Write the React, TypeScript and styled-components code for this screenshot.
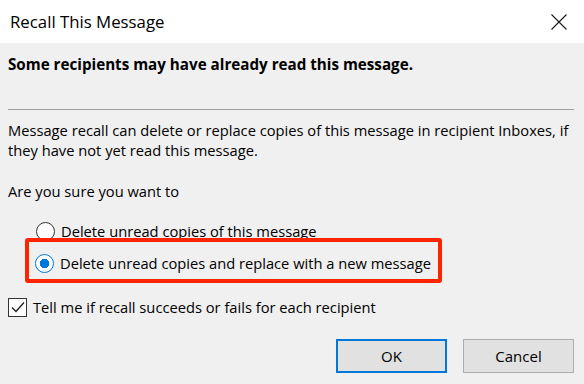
import React from 'react'
import styled, { createGlobalStyle } from 'styled-components'

const GlobalStyle = createGlobalStyle`
    html, body {
        margin: 0;
        padding: 0;
        background: #f0f0f0;
    }
    body {
        font-family: "Open Sans", "Noto Sans", "Liberation Sans", sans-serif;
        color: #000;
    }
`

const App = () => {
    return (
        <Window>
            <GlobalStyle />
            <TitleBar>
                <Title>Recall This Message</Title>
                <CloseButton aria-label='Close'>
                    <svg width='16' height='16' viewBox='0 0 16 16'>
                        <path d='M0.5 0.5 L15.5 15.5 M15.5 0.5 L0.5 15.5' stroke='#1a1a1a' strokeWidth='1.1' fill='none' />
                    </svg>
                </CloseButton>
            </TitleBar>
            <Body>
                <Warning>Some recipients may have already read this message.</Warning>
                <Divider />
                <Paragraph>
                    Message recall can delete or replace copies of this message in recipient Inboxes, if they have not yet read this message.
                </Paragraph>
                <Question>Are you sure you want to</Question>
                <Options>
                    <OptionRow>
                        <Radio />
                        <OptionLabel>Delete unread copies of this message</OptionLabel>
                    </OptionRow>
                    <Highlight>
                        <OptionRow>
                            <Radio checked />
                            <OptionLabel>Delete unread copies and replace with a new message</OptionLabel>
                        </OptionRow>
                    </Highlight>
                </Options>
                <CheckRow>
                    <CheckBox>
                        <svg width='14' height='12' viewBox='0 0 14 12'>
                            <path d='M1 6.5 L5 10.5 L13 1.5' stroke='#222' strokeWidth='1.4' fill='none' />
                        </svg>
                    </CheckBox>
                    <OptionLabel>Tell me if recall succeeds or fails for each recipient</OptionLabel>
                </CheckRow>
                <Buttons>
                    <DialogButton primary>OK</DialogButton>
                    <DialogButton>Cancel</DialogButton>
                </Buttons>
            </Body>
        </Window>
    )
}

const Window = styled.div`
    width: 584px;
    height: 384px;
    display: flex;
    flex-direction: column;
    background: #f0f0f0;
    overflow: hidden;
`

const TitleBar = styled.div`
    height: 43px;
    background: #fff;
    display: flex;
    align-items: center;
    justify-content: space-between;
    padding: 0 17px 0 10px;
    box-sizing: border-box;
`

const Title = styled.div`
    font-size: 16.8px;
    color: #000;
`

const CloseButton = styled.div`
    width: 16px;
    height: 16px;
    display: flex;
`

const Body = styled.div`
    flex: 1;
    padding: 11px 10px 0 8px;
    display: flex;
    flex-direction: column;
`

const Warning = styled.div`
    font-size: 15.2px;
    font-weight: 700;
    line-height: 20px;
`

const Divider = styled.div`
    height: 1px;
    background: #a0a0a0;
    margin-top: 35px;
`

const Paragraph = styled.p`
    margin: 10px 0 0;
    font-size: 14.7px;
    line-height: 20px;
`

const Question = styled.div`
    margin-top: 21px;
    font-size: 14.7px;
    line-height: 20px;
`

const Options = styled.div`
    margin-top: 20px;
    padding-left: 28px;
    display: flex;
    flex-direction: column;
`

const OptionRow = styled.div`
    display: flex;
    align-items: center;
    gap: 6px;
    height: 20px;
`

const Highlight = styled.div`
    margin: -3px 0 0 -11px;
    width: 417px;
    height: 45px;
    box-sizing: border-box;
    border: 4.5px solid #ff2400;
    border-radius: 3px;
    padding: 11px 0 0 6px;
`

const Radio = styled.span<{ checked?: boolean }>`
    width: 19px;
    height: 19px;
    box-sizing: border-box;
    border-radius: 50%;
    border: 1.2px solid ${p => p.checked ? '#0078d7' : '#333'};
    background: ${p => p.checked ? 'radial-gradient(circle, #0078d7 0 4.5px, #fff 5px)' : '#fff'};
    flex-shrink: 0;
`

const OptionLabel = styled.span`
    font-size: 14.7px;
    line-height: 20px;
    white-space: nowrap;
`

const CheckRow = styled.div`
    margin-top: 14px;
    display: flex;
    align-items: center;
    gap: 6px;
`

const CheckBox = styled.span`
    width: 19px;
    height: 19px;
    box-sizing: border-box;
    border: 1px solid #333;
    background: #fff;
    display: flex;
    align-items: center;
    justify-content: center;
`

const Buttons = styled.div`
    margin-top: 22px;
    display: flex;
    justify-content: flex-end;
    gap: 16px;
`

const DialogButton = styled.button<{ primary?: boolean }>`
    width: 111px;
    height: 34px;
    box-sizing: border-box;
    background: #e1e1e1;
    border: ${p => p.primary ? '2px solid #0078d7' : '1px solid #adadad'};
    font-family: inherit;
    font-size: 15px;
    color: #000;
    padding: 0;
`

export default App
